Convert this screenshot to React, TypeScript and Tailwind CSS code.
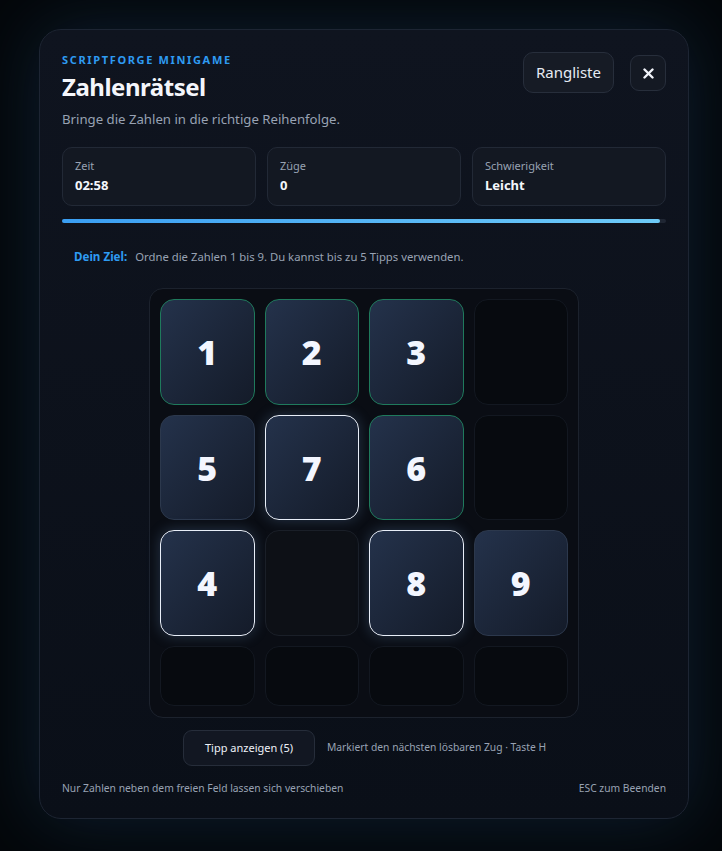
import React from "react";

type Tile = { n?: number; kind: "green" | "white" | "plain" | "empty" | "free" | "dark" };

const rows: Tile[][] = [
  [{ n: 1, kind: "green" }, { n: 2, kind: "green" }, { n: 3, kind: "green" }, { kind: "empty" }],
  [{ n: 5, kind: "plain" }, { n: 7, kind: "white" }, { n: 6, kind: "green" }, { kind: "empty" }],
  [{ n: 4, kind: "white" }, { kind: "free" }, { n: 8, kind: "white" }, { n: 9, kind: "plain" }],
  [{ kind: "dark" }, { kind: "dark" }, { kind: "dark" }, { kind: "dark" }],
];

function Cell({ t }: { t: Tile }) {
  if (t.n === undefined) {
    const cls =
      t.kind === "free"
        ? "bg-[#0d1016] border-[#1a1f28]"
        : "bg-[#070a0f] border-[#131821]";
    return <div className={`rounded-[14px] border ${cls}`} />;
  }
  const border =
    t.kind === "green"
      ? "border-[#1f7a5c]"
      : t.kind === "white"
      ? "border-[#e8eef8] shadow-[0_0_14px_rgba(120,170,230,0.25)]"
      : "border-[#2c384c]";
  return (
    <div
      className={`rounded-[14px] border flex items-center justify-center bg-gradient-to-br from-[#24324b] to-[#141b29] ${border}`}
    >
      <span className="text-[34px] font-black text-[#f3f6ff] leading-none" style={{ fontFamily: '"Noto Sans", "Open Sans", sans-serif' }}>
        {t.n}
      </span>
    </div>
  );
}

export default function App() {
  return (
    <div
      className="w-[722px] h-[851px] bg-[#04070a] overflow-hidden pl-[39px] pt-[29px]"
      style={{ fontFamily: '"Noto Sans", "Open Sans", "Liberation Sans", sans-serif' }}
    >
      <div className="w-[650px] h-[790px] rounded-[22px] border border-[#1d2533] bg-gradient-to-b from-[#0f141f] to-[#0a0f18] shadow-[0_0_70px_rgba(25,60,95,0.45)] px-[22px] pt-[22px] flex flex-col">
        {/* Header */}
        <div className="flex items-start justify-between">
          <div className="flex flex-col">
            <div className="text-[11px] leading-[16px] font-bold tracking-[0.15em] text-[#2e9bf2]">
              SCRIPTFORGE MINIGAME
            </div>
            <div className="text-[24px] leading-[32px] font-bold tracking-[-0.02em] text-[#f4f6fb] mt-[3px]">Zahlenrätsel</div>
            <div className="text-[13.2px] leading-[20px] text-[#98a2b3] mt-[6px]">
              Bringe die Zahlen in die richtige Reihenfolge.
            </div>
          </div>
          <div className="flex items-start gap-[16px]">
            <div className="h-[41px] px-[12px] rounded-[10px] border border-[#272e3b] bg-[#161b25] text-[#e6ebf3] text-[15px] flex items-center">
              Rangliste
            </div>
            <div className="w-[36px] h-[36px] mt-[3px] rounded-[9px] border border-[#272e3b] bg-[#141923] flex items-center justify-center">
              <svg width="11" height="11" viewBox="0 0 11 11">
                <path d="M1.5 1.5 L9.5 9.5 M9.5 1.5 L1.5 9.5" stroke="#f1f4fa" strokeWidth="2.4" strokeLinecap="round" />
              </svg>
            </div>
          </div>
        </div>

        {/* Stats */}
        <div className="grid grid-cols-3 gap-[11px] mt-[18px]">
          {[
            ["Zeit", "02:58"],
            ["Züge", "0"],
            ["Schwierigkeit", "Leicht"],
          ].map(([l, v]) => (
            <div key={l} className="h-[59px] rounded-[10px] border border-[#222936] bg-[#131822] px-[12px] pt-[10px]">
              <div className="text-[11px] leading-[16px] text-[#98a2b3]">{l}</div>
              <div className="text-[13px] leading-[18px] font-bold text-[#f4f6fb] mt-[2px]">{v}</div>
            </div>
          ))}
        </div>

        {/* Progress */}
        <div className="mt-[13px] h-[4px] rounded-full bg-[#1f2633] flex">
          <div className="h-full w-[598px] rounded-full bg-gradient-to-r from-[#3a9ef2] to-[#6ecbf8]" />
        </div>

        {/* Goal */}
        <div className="mt-[26px] pl-[12px] flex items-center gap-[8px] leading-[16px]">
          <span className="text-[11.6px] font-bold text-[#2e9bf2]">Dein Ziel:</span>
          <span className="text-[11.3px] text-[#98a2b3]">Ordne die Zahlen 1 bis 9. Du kannst bis zu 5 Tipps verwenden.</span>
        </div>

        {/* Board */}
        <div className="mt-[23px] flex justify-center">
          <div className="w-[430px] h-[430px] rounded-[14px] border border-[#1c222d] bg-[#0a0d14] p-[10px] grid grid-cols-4 grid-rows-[106px_105px_106px_60px] gap-[10px]">
            {rows.flat().map((t, i) => (
              <Cell key={i} t={t} />
            ))}
          </div>
        </div>

        {/* Hint */}
        <div className="mt-[12px] flex items-center pl-[121px] gap-[12px]">
          <div className="h-[36px] w-[132px] rounded-[9px] border border-[#262d3a] bg-[#121722] text-[#eef2f8] text-[11px] flex items-center justify-center">
            Tipp anzeigen (5)
          </div>
          <div className="text-[10.3px] text-[#98a2b3]">Markiert den nächsten lösbaren Zug · Taste H</div>
        </div>

        {/* Footer */}
        <div className="mt-[14px] flex justify-between text-[10.3px] leading-[16px] text-[#98a2b3]">
          <span>Nur Zahlen neben dem freien Feld lassen sich verschieben</span>
          <span>ESC zum Beenden</span>
        </div>
      </div>
    </div>
  );
}
